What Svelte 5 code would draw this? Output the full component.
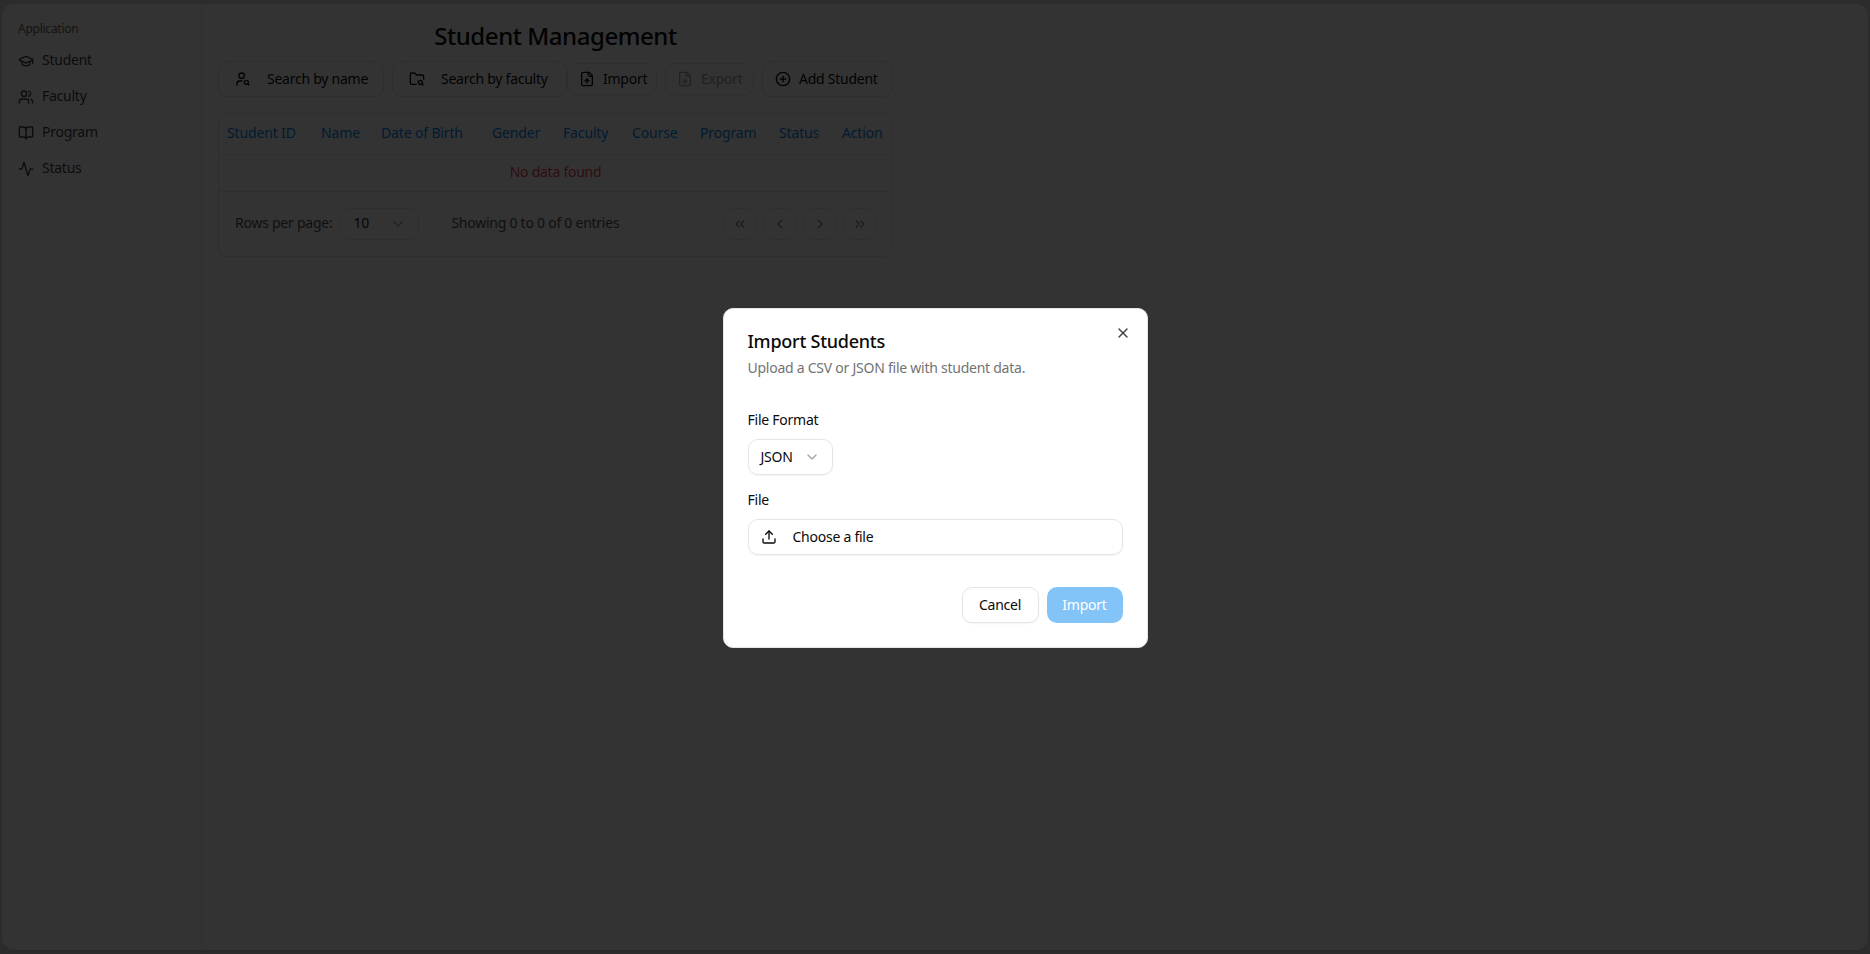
<script>
  const nav = [
    { label: 'Student', icon: 'cap' },
    { label: 'Faculty', icon: 'users' },
    { label: 'Program', icon: 'book' },
    { label: 'Status', icon: 'activity' }
  ];
  const columns = ['Student ID', 'Name', 'Date of Birth', 'Gender', 'Faculty', 'Course', 'Program', 'Status', 'Action'];
  const pagers = ['m11 17-5-5 5-5 M18 17l-5-5 5-5', 'm15 18-6-6 6-6', 'm9 18 6-6-6-6', 'm6 17 5-5-5-5 M13 17l5-5-5-5'];
</script>

<div class="page">
  <div class="panel">
    <aside class="sidebar">
      <div class="group-label">Application</div>
      {#each nav as item}
        <div class="nav-item">
          <svg class="icon" viewBox="0 0 24 24">
            {#if item.icon === 'cap'}
              <path d="M21.42 10.92a1 1 0 0 0-.02-1.84L12.83 5.18a2 2 0 0 0-1.66 0L2.6 9.08a1 1 0 0 0 0 1.83l8.57 3.91a2 2 0 0 0 1.66 0z" /><path d="M22 10v6" /><path d="M6 12.5V16a6 3 0 0 0 12 0v-3.5" />
            {:else if item.icon === 'users'}
              <path d="M16 21v-2a4 4 0 0 0-4-4H6a4 4 0 0 0-4 4v2" /><circle cx="9" cy="7" r="4" /><path d="M22 21v-2a4 4 0 0 0-3-3.87" /><path d="M16 3.13a4 4 0 0 1 0 7.75" />
            {:else if item.icon === 'book'}
              <path d="M12 7v14" /><path d="M3 18a1 1 0 0 1-1-1V4a1 1 0 0 1 1-1h5a4 4 0 0 1 4 4 4 4 0 0 1 4-4h5a1 1 0 0 1 1 1v13a1 1 0 0 1-1 1h-6a3 3 0 0 0-3 3 3 3 0 0 0-3-3z" />
            {:else}
              <path d="M22 12h-2.48a2 2 0 0 0-1.93 1.46l-2.35 8.36a.25.25 0 0 1-.48 0L9.24 2.18a.25.25 0 0 0-.48 0l-2.35 8.36A2 2 0 0 1 4.49 12H2" />
            {/if}
          </svg>
          <span>{item.label}</span>
        </div>
      {/each}
    </aside>

    <main class="content">
      <div class="column">
        <h1>Student Management</h1>
        <div class="toolbar">
          <div class="search name">
            <svg class="icon" viewBox="0 0 24 24"><circle cx="10" cy="7" r="4" /><path d="M10.3 15H7a4 4 0 0 0-4 4v2" /><circle cx="17" cy="17" r="3" /><path d="m21 21-1.9-1.9" /></svg>
            <span>Search by name</span>
          </div>
          <div class="search faculty">
            <svg class="icon" viewBox="0 0 24 24"><circle cx="17" cy="17" r="3" /><path d="M10.7 20H4a2 2 0 0 1-2-2V5a2 2 0 0 1 2-2h3.9a2 2 0 0 1 1.69.9l.81 1.2a2 2 0 0 0 1.67.9H20a2 2 0 0 1 2 2v4.1" /><path d="m21 21-1.9-1.9" /></svg>
            <span>Search by faculty</span>
          </div>
          <button class="btn import">
            <svg class="icon" viewBox="0 0 24 24"><path d="M15 2H6a2 2 0 0 0-2 2v16a2 2 0 0 0 2 2h12a2 2 0 0 0 2-2V7Z" /><path d="M14 2v4a2 2 0 0 0 2 2h4" /><path d="M12 12v6" /><path d="m15 15-3-3-3 3" /></svg>
            <span>Import</span>
          </button>
          <button class="btn export">
            <svg class="icon" viewBox="0 0 24 24"><path d="M15 2H6a2 2 0 0 0-2 2v16a2 2 0 0 0 2 2h12a2 2 0 0 0 2-2V7Z" /><path d="M14 2v4a2 2 0 0 0 2 2h4" /><path d="M12 18v-6" /><path d="m9 15 3 3 3-3" /></svg>
            <span>Export</span>
          </button>
          <button class="btn add">
            <svg class="icon" viewBox="0 0 24 24"><circle cx="12" cy="12" r="10" /><path d="M8 12h8" /><path d="M12 8v8" /></svg>
            <span>Add Student</span>
          </button>
        </div>

        <div class="card">
          <div class="thead">
            {#each columns as col}
              <span>{col}</span>
            {/each}
          </div>
          <div class="empty">No data found</div>
          <div class="footer">
            <span>Rows per page:</span>
            <div class="rows">
              <span>10</span>
              <svg class="icon chev" viewBox="0 0 24 24"><path d="m6 9 6 6 6-6" /></svg>
            </div>
            <span class="showing">Showing 0 to 0 of 0 entries</span>
            <div class="pagers">
              {#each pagers as d}
                <div class="pager"><svg class="icon" viewBox="0 0 24 24"><path {d} /></svg></div>
              {/each}
            </div>
          </div>
        </div>
      </div>
    </main>
  </div>

  <div class="overlay">
    <div class="dialog">
      <svg class="icon close" viewBox="0 0 24 24"><path d="M18 6 6 18" /><path d="m6 6 12 12" /></svg>
      <h2>Import Students</h2>
      <p>Upload a CSV or JSON file with student data.</p>
      <div class="field-label first">File Format</div>
      <div class="format">
        <span>JSON</span>
        <svg class="icon chev" viewBox="0 0 24 24"><path d="m6 9 6 6 6-6" /></svg>
      </div>
      <div class="field-label second">File</div>
      <div class="file">
        <svg class="icon" viewBox="0 0 24 24"><path d="M12 3v12" /><path d="m17 8-5-5-5 5" /><path d="M21 15v4a2 2 0 0 1-2 2H5a2 2 0 0 1-2-2v-4" /></svg>
        <span>Choose a file</span>
      </div>
      <div class="actions">
        <button class="cancel">Cancel</button>
        <button class="submit">Import</button>
      </div>
    </div>
  </div>
</div>

<style>
  :global(body) {
    margin: 0;
    font-family: "Noto Sans", sans-serif;
    letter-spacing: -0.25px;
    color: #0a0a0a;
  }

  .page {
    height: 954px;
    padding: 4px 2px;
    box-sizing: border-box;
    background: #dcdcdc;
    overflow: hidden;
  }

  .panel {
    display: flex;
    height: 100%;
    background: #fff;
    border-radius: 12px;
    box-shadow: 0 1px 2px rgba(0, 0, 0, 0.1);
  }

  .sidebar {
    width: 200px;
    flex: none;
    box-sizing: border-box;
    padding: 15px 16px;
    border-right: 1px solid #eeeeee;
  }

  .group-label {
    height: 24px;
    line-height: 20px;
    font-size: 12px;
    color: #6b5f50;
  }

  .nav-item {
    display: flex;
    align-items: center;
    gap: 8px;
    height: 36px;
    font-size: 14px;
    color: #3f3f46;
  }

  .nav-item span,
  .thead span {
    padding-bottom: 4px;
  }

  .toolbar span,
  .footer span,
  .format span,
  .file span {
    padding-bottom: 2px;
  }

  .icon {
    width: 16px;
    height: 16px;
    flex: none;
    fill: none;
    stroke: currentColor;
    stroke-width: 2;
    stroke-linecap: round;
    stroke-linejoin: round;
  }

  .content {
    flex: 1;
    padding: 0 16px;
  }

  .column {
    width: 675px;
  }

  h1 {
    margin: 0;
    padding-top: 16px;
    height: 41px;
    font-size: 24px;
    line-height: 32px;
    font-weight: 500;
    letter-spacing: -0.45px;
    text-align: center;
  }

  .toolbar {
    display: flex;
    align-items: center;
    height: 36px;
    font-size: 14px;
  }

  .search,
  .btn {
    display: flex;
    align-items: center;
    box-sizing: border-box;
    border: 1px solid #e5e5e5;
    border-radius: 10px;
    background: #fff;
    font: inherit;
    letter-spacing: inherit;
    color: inherit;
    box-shadow: 0 1px 2px rgba(0, 0, 0, 0.05);
  }

  .search {
    height: 36px;
    padding-left: 16px;
    gap: 16px;
  }

  .search.name {
    width: 166px;
    margin-right: 8px;
  }

  .search.faculty {
    width: 175px;
  }

  .btn {
    height: 32px;
    gap: 8px;
    padding: 0 11px;
  }

  .btn.import {
    width: 90px;
    margin-right: 8px;
  }

  .btn.export {
    width: 89px;
    margin-right: 8px;
    color: #a3a3a3;
  }

  .btn.add {
    width: 131px;
    height: 36px;
    padding: 0 12px;
  }

  .card {
    margin-top: 16px;
    border: 1px solid #e5e5e5;
    border-radius: 10px;
    box-sizing: border-box;
    height: 144px;
    box-shadow: 0 1px 2px rgba(0, 0, 0, 0.05);
  }

  .thead {
    display: grid;
    grid-template-columns: 94px 60px 111px 71px 69px 68px 79px 63px auto;
    box-sizing: border-box;
    padding-left: 8px;
    height: 41px;
    align-items: center;
    font-size: 14px;
    letter-spacing: -0.15px;
    color: #0588f0;
    border-bottom: 1px solid #e5e5e5;
  }

  .empty {
    box-sizing: border-box;
    height: 37px;
    line-height: 33px;
    text-align: center;
    font-size: 14px;
    color: #ef4444;
    border-bottom: 1px solid #e5e5e5;
  }

  .footer {
    display: flex;
    align-items: center;
    height: 63px;
    padding: 0 16px;
    font-size: 14px;
    color: #525252;
  }

  .rows {
    display: flex;
    align-items: center;
    justify-content: space-between;
    box-sizing: border-box;
    width: 79px;
    height: 32px;
    margin-left: 8px;
    padding: 0 12px;
    border: 1px solid #e5e5e5;
    border-radius: 10px;
    color: #262626;
  }

  .chev {
    color: #a3a3a3;
  }

  .showing {
    margin-left: 32px;
  }

  .pagers {
    display: flex;
    gap: 8px;
    margin-left: auto;
  }

  .pager {
    display: flex;
    align-items: center;
    justify-content: center;
    width: 32px;
    height: 32px;
    box-sizing: border-box;
    border: 1px solid #e5e5e5;
    border-radius: 10px;
    color: #8a8a8a;
  }

  .overlay {
    position: fixed;
    inset: 0;
    box-sizing: border-box;
    padding-top: 2px;
    display: flex;
    align-items: center;
    justify-content: center;
    background: rgba(0, 0, 0, 0.8);
  }

  .dialog {
    position: relative;
    width: 425px;
    height: 340px;
    box-sizing: border-box;
    padding: 23px 24px;
    background: #fff;
    border: 1px solid #e5e5e5;
    border-radius: 10px;
  }

  .close {
    position: absolute;
    top: 16px;
    right: 16px;
    color: #404040;
  }

  h2 {
    margin: 0;
    font-size: 18px;
    line-height: 18px;
    font-weight: 500;
  }

  p {
    margin: 8px 0 0;
    font-size: 14px;
    line-height: 20px;
    color: #737373;
  }

  .field-label {
    font-size: 14px;
    line-height: 14px;
    font-weight: 450;
  }

  .field-label.first {
    margin-top: 35px;
  }

  .field-label.second {
    margin-top: 18px;
  }

  .format {
    display: flex;
    align-items: center;
    justify-content: space-between;
    box-sizing: border-box;
    width: 85px;
    height: 36px;
    margin-top: 12px;
    padding: 0 12px;
    font-size: 14px;
    border: 1px solid #e5e5e5;
    border-radius: 10px;
    box-shadow: 0 1px 2px rgba(0, 0, 0, 0.05);
  }

  .file {
    display: flex;
    align-items: center;
    gap: 16px;
    box-sizing: border-box;
    height: 36px;
    margin-top: 12px;
    padding: 0 12px;
    font-size: 14px;
    border: 1px solid #e5e5e5;
    border-radius: 10px;
    box-shadow: 0 1px 2px rgba(0, 0, 0, 0.05);
  }

  .actions {
    display: flex;
    justify-content: flex-end;
    gap: 8px;
    margin-top: 32px;
  }

  .actions button {
    width: 76px;
    height: 36px;
    padding: 0 0 2px;
    font: inherit;
    font-size: 14px;
    letter-spacing: inherit;
    border-radius: 10px;
  }

  .actions .cancel {
    width: 77px;
    background: #fff;
    color: #0a0a0a;
    border: 1px solid #e5e5e5;
    box-shadow: 0 1px 2px rgba(0, 0, 0, 0.05);
  }

  .submit {
    background: #82c3f8;
    color: #fff;
    border: none;
  }
</style>
